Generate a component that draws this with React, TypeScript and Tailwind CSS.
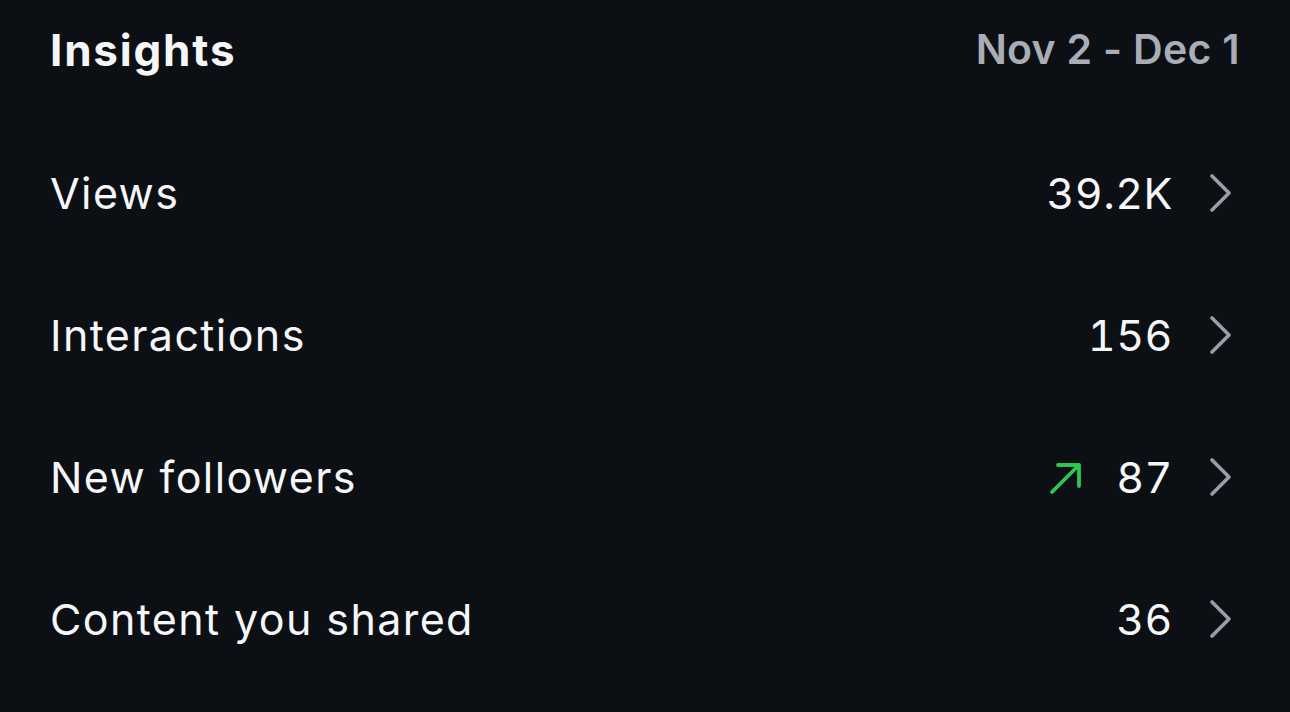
import React from 'react';

type Row = { label: string; value: string; up?: boolean };

const rows: Row[] = [
  { label: 'Views', value: '39.2K' },
  { label: 'Interactions', value: '156' },
  { label: 'New followers', value: '87', up: true },
  { label: 'Content you shared', value: '36' },
];

const Chevron = () => (
  <svg width="26" height="40" viewBox="0 0 26 40" fill="none" className="shrink-0">
    <path d="M4 3 L21 20 L4 37" stroke="#9a9ea6" strokeWidth="3.6" strokeLinecap="round" strokeLinejoin="round" />
  </svg>
);

const UpArrow = () => (
  <svg width="36" height="36" viewBox="0 0 36 36" fill="none" className="shrink-0">
    <path d="M4 33 L31 6 M10 6 H31 V27" stroke="#2dc653" strokeWidth="3.8" strokeLinecap="round" strokeLinejoin="round" />
  </svg>
);

const App: React.FC = () => {
  return (
    <div className="w-[1290px] h-[712px] bg-[#0c1014] text-[#f5f6f7] overflow-hidden" style={{ fontFamily: 'Inter, "Noto Sans", sans-serif' }}>
      <header className="h-[100px] pl-[50px] pr-[50px] flex items-center justify-between">
        <h1 className="text-[44px] font-bold tracking-[1.8px]">Insights</h1>
        <span className="text-[41px] font-semibold tracking-[0.3px] text-[#a8adb6]">Nov 2 - Dec 1</span>
      </header>
      <ul className="mt-[22px]">
        {rows.map((r) => (
          <li key={r.label} className="h-[142px] pl-[50px] pr-[56px] flex items-center justify-between">
            <span className="text-[43px] tracking-[1.4px]">{r.label}</span>
            <div className="flex items-center">
              {r.up && <span className="mr-[32px]"><UpArrow /></span>}
              <span className="text-[43px] tracking-[0.5px] tabular-nums">{r.value}</span>
              <span className="ml-[35px]"><Chevron /></span>
            </div>
          </li>
        ))}
      </ul>
    </div>
  );
};

export default App;
